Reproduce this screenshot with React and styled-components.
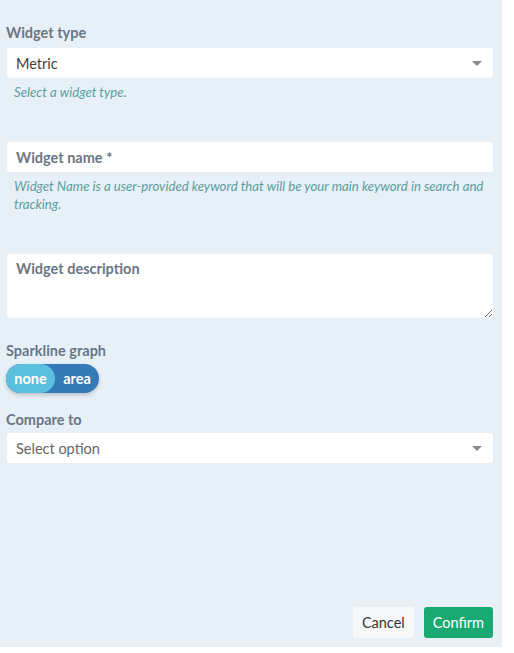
import React, {useState} from 'react';
import styled, {createGlobalStyle} from 'styled-components'

const Global = createGlobalStyle`
    body {
        margin: 0;
        background: #fff;
        font-family: Lato, "Open Sans", sans-serif;
    }
`
const Panel = styled.section`
    width: 502px;
    height: 647px;
    box-sizing: border-box;
    background: #e8f0f7;
    padding: 25px 9px 9px 7px;
    display: flex;
    flex-direction: column;
`
const Field = styled.div`
    display: flex;
    flex-direction: column;
    margin-bottom: ${props => props.mb || 0}px;
`
const Label = styled.label`
    font-size: 14.5px;
    line-height: 16px;
    font-weight: 700;
    color: #6b7684;
    margin: 0 0 ${props => props.gap || 5}px -1px;
`
const SelectBox = styled.div`
    height: 30px;
    background: #fff;
    border-radius: 3px;
    display: flex;
    align-items: center;
    justify-content: space-between;
    padding: 0 11px 0 9px;
    font-size: 14.5px;
    color: ${props => props.muted ? '#666' : '#3f3f3f'};
`
const Caret = styled.span`
    width: 0;
    height: 0;
    border-left: 5px solid transparent;
    border-right: 5px solid transparent;
    border-top: 5px solid #8a8a8a;
`
const Input = styled.input`
    height: 30px;
    box-sizing: border-box;
    border: none;
    border-radius: 3px;
    padding: 0 9px;
    font-family: inherit;
    font-size: 14.5px;
    outline: none;
    &::placeholder {
        color: #6b7684;
        font-weight: 700;
    }
`
const TextArea = styled.textarea`
    height: 64px;
    box-sizing: border-box;
    border: none;
    border-radius: 3px;
    padding: 6px 9px;
    font-family: inherit;
    font-size: 14.5px;
    outline: none;
    &::placeholder {
        color: #6b7684;
        font-weight: 700;
    }
`
const Help = styled.p`
    margin: 5px 0 0 7px;
    font-size: 13.2px;
    font-style: italic;
    line-height: 18px;
    color: #5a9e9e;
`
const Toggle = styled.div`
    display: flex;
    width: 93px;
    height: 29px;
    border-radius: 15px;
    background: #337ab7;
    box-shadow: 0 2px 4px rgba(0,0,0,0.2);
    overflow: hidden;
    margin-left: -1px;
`
const ToggleOpt = styled.span`
    flex: ${props => props.on ? '0 0 49px' : 1};
    display: flex;
    align-items: center;
    justify-content: center;
    border-radius: 15px;
    background: ${props => props.on ? '#5bc0de' : 'transparent'};
    color: #fff;
    font-size: 14.5px;
    font-weight: 700;
`
const Spacer = styled.div`
    flex: 1;
`
const Footer = styled.div`
    display: flex;
    justify-content: flex-end;
    gap: 10px;
`
const Button = styled.button`
    height: 31px;
    border: none;
    border-radius: 3px;
    padding: 0 ${props => props.primary ? 9 : 9}px;
    font-family: inherit;
    font-size: 14.5px;
    background: ${props => props.primary ? '#1aa970' : '#f6f8fa'};
    color: ${props => props.primary ? '#fff' : '#333'};
    cursor: pointer;
`

export default function App () {
    let [spark, setSpark] = useState('none')
    return (
        <Panel>
            <Global />
            <Field mb={41}>
                <Label gap={7}>Widget type</Label>
                <SelectBox>Metric<Caret /></SelectBox>
                <Help>Select a widget type.</Help>
            </Field>
            <Field mb={41}>
                <Input placeholder="Widget name *" />
                <Help>Widget Name is a user-provided keyword that will be your main keyword in search and tracking.</Help>
            </Field>
            <Field mb={25}>
                <TextArea placeholder="Widget description" />
            </Field>
            <Field mb={19}>
                <Label>Sparkline graph</Label>
                <Toggle>
                    <ToggleOpt on={spark === 'none'} onClick={() => setSpark('none')}>none</ToggleOpt>
                    <ToggleOpt on={spark === 'area'} onClick={() => setSpark('area')}>area</ToggleOpt>
                </Toggle>
            </Field>
            <Field>
                <Label>Compare to</Label>
                <SelectBox muted>Select option<Caret /></SelectBox>
            </Field>
            <Spacer />
            <Footer>
                <Button>Cancel</Button>
                <Button primary>Confirm</Button>
            </Footer>
        </Panel>
    )
}
